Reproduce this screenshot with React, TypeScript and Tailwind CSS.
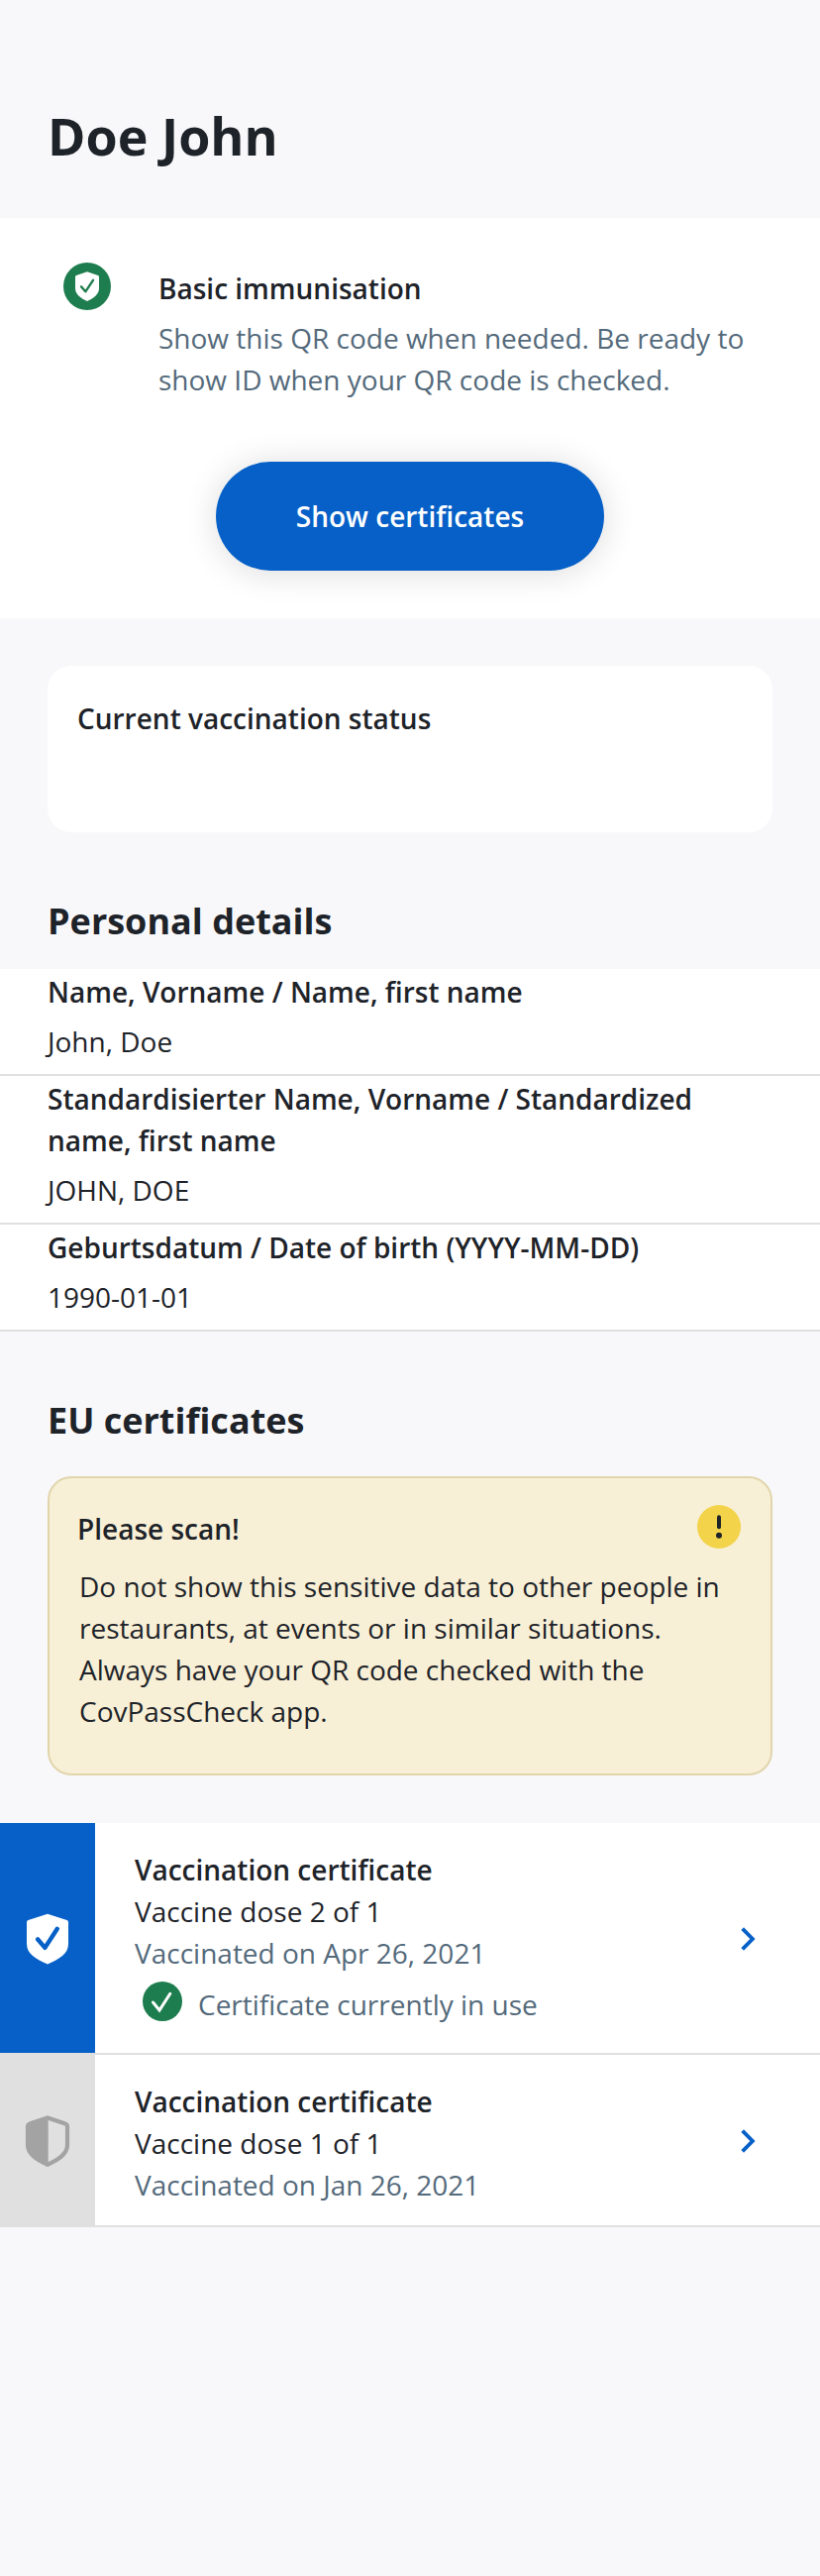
import React from "react";

const details = [
  { label: "Name, Vorname / Name, first name", value: "John, Doe" },
  { label: "Standardisierter Name, Vorname / Standardized name, first name", value: "JOHN, DOE" },
  { label: "Geburtsdatum / Date of birth (YYYY-MM-DD)", value: "1990-01-01" },
];

const SHIELD = "M24 9.2 L35 13 Q36 13.4 36 14.5 V26 C36 32 31 35.6 24 39 C17 35.6 12 32 12 26 V14.5 Q12 13.4 13 13 Z";

function StatusIcon() {
  return (
    <svg className="size-12" viewBox="0 0 48 48" fill="none">
      <circle cx="24" cy="24" r="24" fill="#1e7d4e" />
      <path d={SHIELD} fill="#fff" />
      <path d="M18 24.3 L22.3 29.3 L30 17.8" stroke="#1e7d4e" strokeWidth="2.4" strokeLinecap="round" strokeLinejoin="round" />
    </svg>
  );
}

function FullShield() {
  return (
    <svg className="h-[52px] w-12" viewBox="0 0 48 52" fill="none">
      <path d="M24 .8 L43.5 7 Q45 7.6 45 9.2 V31 C45 41 36 46 24 51.5 C12 46 3 41 3 31 V9.2 Q3 7.6 4.5 7 Z" fill="#fff" />
      <path d="M14 26.3 L21.4 34.9 L33.8 15.8" stroke="#0660c7" strokeWidth="4.4" strokeLinecap="round" strokeLinejoin="round" />
    </svg>
  );
}

function HalfShield() {
  return (
    <svg className="h-[52px] w-12" viewBox="0 0 48 52" fill="none">
      <path d="M24 2.4 L42 8.6 Q44 9.4 44 11 V30 C44 39 35 44.6 24 49.8 C13 44.6 4 39 4 30 V11 Q4 9.4 6 8.6 Z" stroke="#a3a3a3" strokeWidth="4.2" strokeLinejoin="round" />
      <path d="M24.7 2 V50 H24 C13 45 4 40 4 30 V11 Q4 8.8 6 8 L24 2 Z" fill="#a3a3a3" />
    </svg>
  );
}

function Chevron() {
  return (
    <svg className="h-6 w-4 shrink-0" viewBox="0 0 16 24" fill="none">
      <path d="M1.7 1.7 L11.9 12 L1.7 22.3" stroke="#0660c7" strokeWidth="3.8" />
    </svg>
  );
}

function CertificateRow({ dose, date, active }: { dose: string; date: string; active?: boolean }) {
  return (
    <li className="flex border-b-2 border-[#e0e0e0] bg-white">
      <div className={`flex w-24 shrink-0 items-center justify-center pt-0.5 ${active ? "bg-[#0660c7]" : "bg-[#e0e0e0]"}`}>
        {active ? <FullShield /> : <HalfShield />}
      </div>
      <div className={`flex-1 pt-[26px] pl-10 ${active ? "pb-7" : "pb-5"}`}>
        <h3 className="font-semibold">Vaccination certificate</h3>
        <p>{dose}</p>
        <p className="text-[#546a7b]">{date}</p>
        {active && (
          <div className="mt-2.5 flex h-[42px] pl-2 text-[#546a7b]">
            <svg className="-mt-0.5 mr-4 size-10" viewBox="0 0 40 40" fill="none">
              <circle cx="20" cy="20" r="20" fill="#1e7d4e" />
              <path d="M10.5 21 L17 29 L27.8 12.3" stroke="#fff" strokeWidth="3" strokeLinecap="round" />
            </svg>
            <span>Certificate currently in use</span>
          </div>
        )}
      </div>
      <div className="flex items-center pt-0.5 pr-16">
        <Chevron />
      </div>
    </li>
  );
}

export default function App() {
  return (
    <main className="min-h-[2600px] w-[828px] bg-[#f8f8fa] font-['Open_Sans','Noto_Sans',sans-serif] text-[28px] leading-[42px] text-[#1e2329]">
      <header className="h-[220px] px-12 pt-[99px]">
        <h1 className="text-[52px] leading-[76px] font-bold">Doe John</h1>
      </header>

      <section className="h-[404px] bg-white pt-[45px]">
        <div className="flex pl-16">
          <StatusIcon />
          <div className="ml-12 pt-[5px]">
            <h2 className="font-semibold">Basic immunisation</h2>
            <p className="mt-2 w-[610px] text-[#546a7b]">
              Show this QR code when needed. Be ready to show ID when your QR code is checked.
            </p>
          </div>
        </div>
        <button className="mx-auto mt-[62px] block h-[110px] w-[392px] rounded-full bg-[#0660c7] font-semibold text-white shadow-[0_2px_34px_rgba(0,0,0,0.14)]">
          Show certificates
        </button>
      </section>

      <section className="mx-12 mt-12 h-[168px] rounded-[24px] bg-white px-[30px] pt-8">
        <h2 className="font-semibold">Current vaccination status</h2>
      </section>

      <section>
        <h2 className="h-[138px] px-12 pt-[65px] text-[36px] leading-[50px] font-bold">Personal details</h2>
        <dl>
          {details.map((d) => (
            <div key={d.value} className="border-b-2 border-[#e0e0e0] bg-white px-12 pt-0.5 pb-3">
              <dt className="font-semibold">{d.label}</dt>
              <dd className="mt-2">{d.value}</dd>
            </div>
          ))}
        </dl>
      </section>

      <section>
        <h2 className="h-[146px] px-12 pt-[65px] text-[36px] leading-[50px] font-bold">EU certificates</h2>
        <div className="mx-12 h-[302px] rounded-[24px] border-2 border-[#e1d5ac] bg-[#f8f0d6] pt-[27px] pr-[30px] pl-7">
          <div className="flex items-start justify-between">
            <h3 className="pt-[3px] font-semibold">Please scan!</h3>
            <svg className="size-11" viewBox="0 0 44 44" fill="none">
              <circle cx="22" cy="22" r="22" fill="#f3d34a" />
              <path d="M22 12.3 V22.3" stroke="#1e2329" strokeWidth="4" strokeLinecap="round" />
              <circle cx="22" cy="30.7" r="3" fill="#1e2329" />
            </svg>
          </div>
          <p className="mt-4 pl-0.5">
            Do not show this sensitive data to other people in restaurants, at events or in similar situations. Always have your QR code checked with the CovPassCheck app.
          </p>
        </div>
        <ul className="mt-12">
          <CertificateRow dose="Vaccine dose 2 of 1" date="Vaccinated on Apr 26, 2021" active />
          <CertificateRow dose="Vaccine dose 1 of 1" date="Vaccinated on Jan 26, 2021" />
        </ul>
      </section>
    </main>
  );
}
